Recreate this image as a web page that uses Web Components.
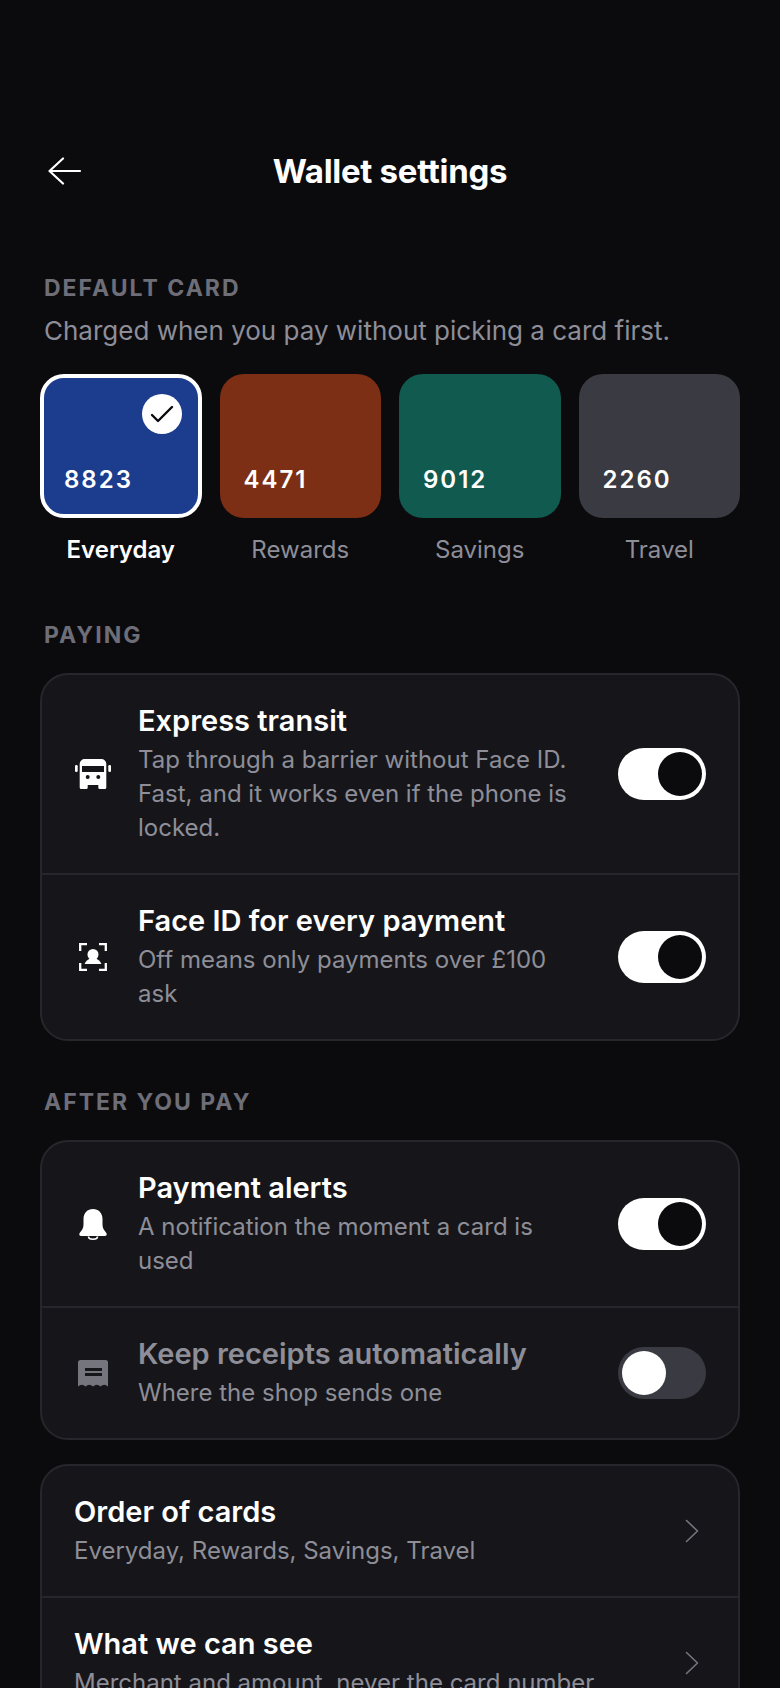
<!DOCTYPE html>
<html>
<head>
<meta charset="utf-8">
<style>
  html, body { margin: 0; background: #0b0b0e; height: 1688px; overflow: hidden; }
  body { font-family: Inter, "Liberation Sans", sans-serif; color: #fff; }
  wallet-screen { display: block; }
</style>
</head>
<body>
<wallet-screen>
  <top-bar title="Wallet settings"></top-bar>

  <section-label>DEFAULT CARD</section-label>
  <section-note>Charged when you pay without picking a card first.</section-note>
  <card-picker>
    <pay-card number="8823" name="Everyday" color="#1c3d8e" selected></pay-card>
    <pay-card number="4471" name="Rewards" color="#7c2f14"></pay-card>
    <pay-card number="9012" name="Savings" color="#115a4f"></pay-card>
    <pay-card number="2260" name="Travel" color="#3a3a42"></pay-card>
  </card-picker>

  <section-label class="paying">PAYING</section-label>
  <settings-panel>
    <setting-row title="Express transit" sub="Tap through a barrier without Face ID. Fast, and it works even if the phone is locked." on>
      <svg slot="icon" width="36" height="30" viewBox="0 0 36 30" fill="#fff">
        <path fill-rule="evenodd" d="M9.700 0h16.600a5 5 0 0 1 5 5v23.500a1.500 1.500 0 0 1-1.500 1.500h-5a1.500 1.500 0 0 1-1.500-1.500V26H12.700v2.500a1.500 1.500 0 0 1-1.500 1.500h-5a1.500 1.500 0 0 1-1.500-1.500V5a5 5 0 0 1 5-5z M7 7v6h22V7z M12.700 16a2 2 0 1 0 0 4 2 2 0 0 0 0-4z M23.300 16a2 2 0 1 0 0 4 2 2 0 0 0 0-4z"/>
        <rect x="0" y="6" width="2.700" height="7" rx="1.200"/>
        <rect x="33.300" y="6" width="2.700" height="7" rx="1.200"/>
      </svg>
    </setting-row>
    <setting-row title="Face ID for every payment" sub="Off means only payments over £100 ask" on>
      <svg slot="icon" width="28" height="28" viewBox="0 0 28 28" fill="none" stroke="#fff" stroke-width="2.300">
        <path d="M1.200 8V1.200H8M20 1.200h6.800V8M26.800 20v6.800H20M8 26.800H1.200V20"/>
        <circle cx="14" cy="11.500" r="5.500" fill="#fff" stroke="none"/>
        <path d="M5.700 21c1-3.500 4-5.500 8.300-5.500s7.300 2 8.300 5.500z" fill="#fff" stroke="none"/>
      </svg>
    </setting-row>
  </settings-panel>

  <section-label class="after">AFTER YOU PAY</section-label>
  <settings-panel>
    <setting-row title="Payment alerts" sub="A notification the moment a card is used" on>
      <svg slot="icon" width="28" height="31" viewBox="0 0 28 31" fill="#fff">
        <path d="M14 0C8.500 0 4.500 4 4.500 10v5.500C4.500 19 3 21 1 23.500-.3 25.200.3 27 2 27h24c1.700 0 2.300-1.800 1-3.500C25 21 23.500 19 23.500 15.500V10C23.500 4 19.500 0 14 0z"/>
        <path d="M9.500 27.500c0 2 2 2.700 4.500 2.700s4.500-.7 4.500-2.700" fill="none" stroke="#fff" stroke-width="1.600"/>
      </svg>
    </setting-row>
    <setting-row dim title="Keep receipts automatically" sub="Where the shop sends one">
      <svg slot="icon" width="32" height="27" viewBox="0 0 32 27">
        <path fill="#75757e" d="M3.500 0h25A2.500 2.500 0 0 1 31 2.500V26.500q-3.750-3.500-7.500 0-3.750-3.500-7.500 0-3.750-3.500-7.500 0-3.750-3.500-7.500 0V2.500A2.500 2.500 0 0 1 3.500 0z"/>
        <path fill="#16161a" d="M8 8h17v3H8zM8 13h17v3H8z"/>
      </svg>
    </setting-row>
  </settings-panel>

  <settings-panel class="links">
    <link-row title="Order of cards" sub="Everyday, Rewards, Savings, Travel"></link-row>
    <link-row title="What we can see" sub="Merchant and amount, never the card number"></link-row>
  </settings-panel>
</wallet-screen>

<script>
class TopBar extends HTMLElement {
  constructor() {
    super();
    this.attachShadow({ mode: "open" });
    this.shadowRoot.innerHTML = `
      <style>
        :host { display: block; box-sizing: border-box; height: 248px; padding: 149px 40px 0; }
        .bar { display: grid; grid-template-columns: 48px 1fr 48px; align-items: center; height: 44px; }
        h1 { margin: 0 0 2px; text-align: center; font-size: 33px; line-height: 44px; font-weight: 700; letter-spacing: -0.3px; }
        svg { display: block; }
      </style>
      <div class="bar">
        <svg width="48" height="30" viewBox="0 0 48 30" fill="none" stroke="#fff" stroke-width="2.200" stroke-linecap="round" stroke-linejoin="round">
          <path d="M9.500 14H40M23 1.500 9.500 14 23 26.500"/>
        </svg>
        <h1></h1>
        <span></span>
      </div>`;
  }
  connectedCallback() {
    this.shadowRoot.querySelector("h1").textContent = this.getAttribute("title") || "";
  }
}
customElements.define("top-bar", TopBar);

class SectionLabel extends HTMLElement {
  constructor() {
    super();
    this.attachShadow({ mode: "open" });
    this.shadowRoot.innerHTML = `
      <style>
        :host { display: block; padding: 24px 44px 0; font-size: 23px; line-height: 32px; font-weight: 700; letter-spacing: 2px; color: #6e6e78; }
        :host(.paying) { padding-top: 52px; }
        :host(.after) { padding-top: 45px; }
      </style>
      <slot></slot>`;
  }
}
customElements.define("section-label", SectionLabel);

class SectionNote extends HTMLElement {
  constructor() {
    super();
    this.attachShadow({ mode: "open" });
    this.shadowRoot.innerHTML = `
      <style>
        :host { display: block; padding: 9px 44px 0; font-size: 26px; line-height: 36px; color: #8e8e98; }
      </style>
      <slot></slot>`;
  }
}
customElements.define("section-note", SectionNote);

class CardPicker extends HTMLElement {
  constructor() {
    super();
    this.attachShadow({ mode: "open" });
    this.shadowRoot.innerHTML = `
      <style>
        :host { display: grid; grid-template-columns: repeat(4, 1fr); gap: 18px; padding: 25px 40px 0; }
      </style>
      <slot></slot>`;
  }
}
customElements.define("card-picker", CardPicker);

class PayCard extends HTMLElement {
  constructor() {
    super();
    this.attachShadow({ mode: "open" });
    this.shadowRoot.innerHTML = `
      <style>
        :host { display: block; text-align: center; }
        .face { position: relative; box-sizing: border-box; height: 144px; border-radius: 24px; padding: 0 24px 20px; display: flex; align-items: flex-end; }
        :host([selected]) .face { border: 4px solid #fff; padding: 0 20px 16px; }
        .num { font-size: 24px; line-height: 36px; font-weight: 600; letter-spacing: 2px; color: #fff; }
        .tick { display: none; position: absolute; top: 16px; right: 16px; width: 40px; height: 40px; border-radius: 50%; background: #fff; align-items: center; justify-content: center; }
        :host([selected]) .tick { display: flex; }
        .name { margin-top: 15px; font-size: 24px; line-height: 34px; color: #8e8e98; }
        :host([selected]) .name { color: #fff; font-weight: 600; }
      </style>
      <div class="face">
        <span class="num"></span>
        <span class="tick">
          <svg width="24" height="20" viewBox="0 0 24 20" fill="none" stroke="#0b0b0e" stroke-width="2.400" stroke-linecap="round" stroke-linejoin="round"><path d="M2 11l6 6L22 3"/></svg>
        </span>
      </div>
      <div class="name"></div>`;
  }
  connectedCallback() {
    this.shadowRoot.querySelector(".face").style.background = this.getAttribute("color");
    this.shadowRoot.querySelector(".num").textContent = this.getAttribute("number");
    this.shadowRoot.querySelector(".name").textContent = this.getAttribute("name");
  }
}
customElements.define("pay-card", PayCard);

class SettingsPanel extends HTMLElement {
  constructor() {
    super();
    this.attachShadow({ mode: "open" });
    this.shadowRoot.innerHTML = `
      <style>
        :host { display: block; box-sizing: border-box; margin: 22px 40px 0; border: 2px solid #26262c; border-radius: 28px; background: #16161a; overflow: hidden; }
        :host(.links) { margin-top: 24px; }
      </style>
      <slot></slot>`;
  }
}
customElements.define("settings-panel", SettingsPanel);

class SettingRow extends HTMLElement {
  constructor() {
    super();
    this.attachShadow({ mode: "open" });
    this.shadowRoot.innerHTML = `
      <style>
        :host { display: flex; align-items: center; padding: 28px 32px; gap: 24px; }
        :host(:not(:last-child)) { border-bottom: 2px solid #26262c; }
        .icon { flex: none; width: 40px; display: flex; justify-content: center; align-items: center; margin: 0 1.500px 0 -1.500px; }
        .text { flex: 1; min-width: 0; }
        .title { font-size: 29px; line-height: 36px; font-weight: 600; color: #fff; }
        :host([dim]) .title { color: #8e8e98; }
        .sub { margin-top: 4px; font-size: 24px; line-height: 34px; color: #8e8e98; }
        .track { flex: none; box-sizing: border-box; width: 88px; height: 52px; border-radius: 26px; background: #fff; padding: 4px; display: flex; justify-content: flex-end; margin-left: 24px; }
        :host(:not([on])) .track { background: #3a3a42; justify-content: flex-start; }
        .knob { width: 44px; height: 44px; border-radius: 50%; background: #0b0b0e; }
        :host(:not([on])) .knob { background: #fff; }
      </style>
      <div class="icon"><slot name="icon"></slot></div>
      <div class="text"><div class="title"></div><div class="sub"></div></div>
      <div class="track"><div class="knob"></div></div>`;
  }
  connectedCallback() {
    this.shadowRoot.querySelector(".title").textContent = this.getAttribute("title");
    this.shadowRoot.querySelector(".sub").textContent = this.getAttribute("sub");
  }
}
customElements.define("setting-row", SettingRow);

class LinkRow extends HTMLElement {
  constructor() {
    super();
    this.attachShadow({ mode: "open" });
    this.shadowRoot.innerHTML = `
      <style>
        :host { display: flex; align-items: center; padding: 28px 39px 28px 32px; gap: 24px; }
        :host(:not(:last-child)) { border-bottom: 2px solid #26262c; }
        .text { flex: 1; min-width: 0; }
        .title { font-size: 29px; line-height: 36px; font-weight: 600; color: #fff; }
        .sub { margin-top: 4px; font-size: 24px; line-height: 34px; color: #8e8e98; }
      </style>
      <div class="text"><div class="title"></div><div class="sub"></div></div>
      <svg width="14" height="24" viewBox="0 0 14 24" fill="none" stroke="#75757e" stroke-width="1.600" stroke-linecap="round" stroke-linejoin="round"><path d="M1.500 1.500l11 10.500-11 10.500"/></svg>`;
  }
  connectedCallback() {
    this.shadowRoot.querySelector(".title").textContent = this.getAttribute("title");
    this.shadowRoot.querySelector(".sub").textContent = this.getAttribute("sub");
  }
}
customElements.define("link-row", LinkRow);

class WalletScreen extends HTMLElement {}
customElements.define("wallet-screen", WalletScreen);
</script>
</body>
</html>
